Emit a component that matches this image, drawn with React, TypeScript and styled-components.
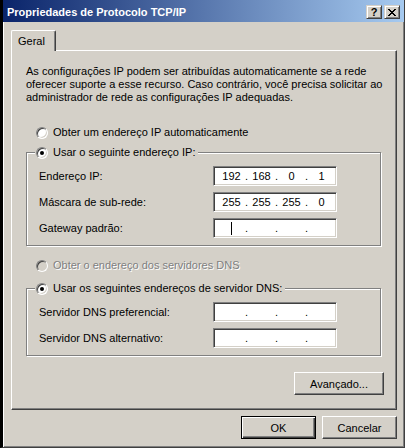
import { Fragment } from "react"
import styled, { createGlobalStyle, css } from "styled-components"

const GlobalStyle = createGlobalStyle`
  html, body {
    margin: 0;
    padding: 0;
    background: #d4d0c8;
  }
  body {
    font-family: "Liberation Sans", Arial, sans-serif;
    font-size: 11px;
    color: #000;
  }
  * {
    box-sizing: border-box;
  }
`

const Window = styled.div`
  width: 405px;
  height: 448px;
  display: flex;
  flex-direction: column;
  background: #d4d0c8;
  border-left: 3px solid #000;
  border-right: 1px solid #404040;
  border-bottom: 1px solid #404040;
  box-shadow: inset 1px 0 0 #fff, inset -1px -1px 0 #808080;
`

const TitleBar = styled.div`
  height: 22px;
  display: flex;
  align-items: center;
  gap: 2px;
  padding: 2px 4px 0 4px;
  background: linear-gradient(to right, #0a246a, #a6caf0);
`

const Title = styled.div`
  flex: 1;
  color: #fff;
  font-weight: bold;
  line-height: 13px;
  white-space: nowrap;
`

const CaptionButton = styled.button`
  width: 16px;
  height: 14px;
  padding: 0;
  display: flex;
  align-items: center;
  justify-content: center;
  background: #d4d0c8;
  border: 1px solid;
  border-color: #d4d0c8 #404040 #404040 #d4d0c8;
  box-shadow: inset 1px 1px 0 #fff, inset -1px -1px 0 #808080;
  font-family: inherit;
  font-size: 11px;
  font-weight: bold;
  line-height: 11px;
  color: #000;
`

const Content = styled.div`
  flex: 1;
  display: flex;
  flex-direction: column;
  padding: 8px 7px 8px 8px;
`

const TabStrip = styled.div`
  display: flex;
`

const Tab = styled.div`
  position: relative;
  z-index: 1;
  width: 45px;
  height: 21px;
  margin-bottom: -1px;
  padding-left: 6px;
  display: flex;
  align-items: center;
  background: #d4d0c8;
  border-top: 1px solid #fff;
  border-left: 1px solid #fff;
  border-right: 1px solid #404040;
  border-radius: 2px 2px 0 0;
  box-shadow: inset -1px 0 0 #808080;
`

const Panel = styled.div`
  height: 360px;
  display: flex;
  flex-direction: column;
  padding: 14px 12px 0 14px;
  border-top: 1px solid #fff;
  border-left: 1px solid #fff;
  border-right: 1px solid #404040;
  border-bottom: 1px solid #404040;
  box-shadow: inset -1px -1px 0 #808080;
`

const Description = styled.p`
  margin: 0;
  line-height: 13px;
  white-space: nowrap;
`

const RadioRow = styled.div<{ $top: number; $disabled?: boolean }>`
  height: 13px;
  margin: ${p => p.$top}px 0 0 10px;
  display: flex;
  align-items: center;
  gap: 5px;
  line-height: 13px;
  white-space: nowrap;
  ${p => p.$disabled && css`
    color: #808080;
    text-shadow: 1px 1px 0 #fff;
  `}
`

const RadioCircle = styled.span<{ $disabled?: boolean }>`
  width: 12px;
  height: 12px;
  flex: none;
  display: flex;
  align-items: center;
  justify-content: center;
  border-radius: 50%;
  border: 1px solid;
  border-color: #808080 #fff #fff #808080;
  background: ${p => (p.$disabled ? "#d4d0c8" : "#fff")};
  box-shadow: inset 1px 1px 0 #404040, inset -1px -1px 0 #d4d0c8;
`

const RadioDot = styled.span`
  width: 4px;
  height: 4px;
  border-radius: 50%;
  background: #000;
`

const GroupBox = styled.div<{ $top: number }>`
  width: 355px;
  margin-top: ${p => p.$top}px;
  border: 1px solid #808080;
  box-shadow: inset 1px 1px 0 #fff, 1px 1px 0 #fff;
`

const Legend = styled.div`
  width: fit-content;
  height: 13px;
  margin: -7px 0 0 8px;
  padding: 0 3px 0 1px;
  display: flex;
  align-items: center;
  gap: 5px;
  line-height: 13px;
  white-space: nowrap;
  background: #d4d0c8;
`

const FieldGrid = styled.div`
  display: grid;
  grid-template-columns: 174px 124px;
  row-gap: 6px;
  align-items: center;
  padding: 7px 0 7px 12px;
`

const FieldLabel = styled.span`
  line-height: 13px;
  white-space: nowrap;
`

const IpField = styled.div`
  width: 124px;
  height: 20px;
  display: flex;
  align-items: center;
  padding: 0 1px 0 4px;
  background: #fff;
  border: 1px solid;
  border-color: #808080 #fff #fff #808080;
  box-shadow: inset 1px 1px 0 #404040, inset -1px -1px 0 #d4d0c8;
  line-height: 13px;
`

const Octet = styled.span`
  flex: 1;
  display: flex;
  justify-content: center;
  align-items: center;
`

const Dot = styled.span`
  width: 3px;
  display: flex;
  justify-content: center;
`

const Caret = styled.span`
  width: 1px;
  height: 13px;
  background: #000;
`

const PushButton = styled.button<{ $width: number; $default?: boolean }>`
  width: ${p => p.$width}px;
  height: 23px;
  padding: 0;
  font-family: inherit;
  font-size: 11px;
  color: #000;
  background: #d4d0c8;
  border: 1px solid;
  border-color: #fff #404040 #404040 #fff;
  box-shadow: inset -1px -1px 0 #808080;
  ${p => p.$default && css`
    border-color: #000;
    box-shadow: inset 1px 1px 0 #fff, inset -1px -1px 0 #404040, inset -2px -2px 0 #808080;
  `}
`

const AdvancedButton = styled(PushButton)`
  align-self: flex-end;
  margin-top: 16px;
`

const Footer = styled.div`
  margin-top: 6px;
  display: flex;
  justify-content: flex-end;
  gap: 6px;
`

// classic 8x7 close cross, one char per pixel
const closeGlyph = ["11000011", "01100110", "00111100", "00011000", "00111100", "01100110", "11000011"]

const CloseIcon = () => (
  <svg width="8" height="7" viewBox="0 0 8 7" shapeRendering="crispEdges">
    {closeGlyph.map((row, y) =>
      row.split("").map((c, x) => (c === "1" ? <rect key={`${x}-${y}`} x={x} y={y} width="1" height="1" fill="#000" /> : null))
    )}
  </svg>
)

const Radio = ({ checked, disabled }: { checked?: boolean; disabled?: boolean }) => (
  <RadioCircle $disabled={disabled}>{checked && <RadioDot />}</RadioCircle>
)

type FieldRow = { label: string; octets?: string[]; caret?: boolean }

const IpInput = ({ octets, caret }: { octets?: string[]; caret?: boolean }) => (
  <IpField>
    {[0, 1, 2, 3].map(i => (
      <Fragment key={i}>
        <Octet>{caret && i === 0 ? <Caret /> : octets?.[i]}</Octet>
        {i < 3 && <Dot>.</Dot>}
      </Fragment>
    ))}
  </IpField>
)

const Fields = ({ rows }: { rows: FieldRow[] }) => (
  <FieldGrid>
    {rows.map(r => (
      <Fragment key={r.label}>
        <FieldLabel>{r.label}</FieldLabel>
        <IpInput octets={r.octets} caret={r.caret} />
      </Fragment>
    ))}
  </FieldGrid>
)

const ipRows: FieldRow[] = [
  { label: "Endereço IP:", octets: ["192", "168", "0", "1"] },
  { label: "Máscara de sub-rede:", octets: ["255", "255", "255", "0"] },
  { label: "Gateway padrão:", caret: true },
]

const dnsRows: FieldRow[] = [
  { label: "Servidor DNS preferencial:" },
  { label: "Servidor DNS alternativo:" },
]

const App = () => {
  return (
    <>
      <GlobalStyle />
      <Window>
        <TitleBar>
          <Title>Propriedades de Protocolo TCP/IP</Title>
          <CaptionButton>?</CaptionButton>
          <CaptionButton><CloseIcon /></CaptionButton>
        </TitleBar>
        <Content>
          <TabStrip>
            <Tab>Geral</Tab>
          </TabStrip>
          <Panel>
            <Description>
              As configurações IP podem ser atribuídas automaticamente se a rede<br />
              oferecer suporte a esse recurso. Caso contrário, você precisa solicitar ao<br />
              administrador de rede as configurações IP adequadas.
            </Description>
            <RadioRow $top={22}>
              <Radio />
              <span>Obter um endereço IP automaticamente</span>
            </RadioRow>
            <GroupBox $top={13}>
              <Legend>
                <Radio checked />
                <span>Usar o seguinte endereço IP:</span>
              </Legend>
              <Fields rows={ipRows} />
            </GroupBox>
            <RadioRow $top={13} $disabled>
              <Radio disabled />
              <span>Obter o endereço dos servidores DNS</span>
            </RadioRow>
            <GroupBox $top={16}>
              <Legend>
                <Radio checked />
                <span>Usar os seguintes endereços de servidor DNS:</span>
              </Legend>
              <Fields rows={dnsRows} />
            </GroupBox>
            <AdvancedButton $width={90}>Avançado...</AdvancedButton>
          </Panel>
          <Footer>
            <PushButton $width={75} $default>OK</PushButton>
            <PushButton $width={75}>Cancelar</PushButton>
          </Footer>
        </Content>
      </Window>
    </>
  )
}

export default App
